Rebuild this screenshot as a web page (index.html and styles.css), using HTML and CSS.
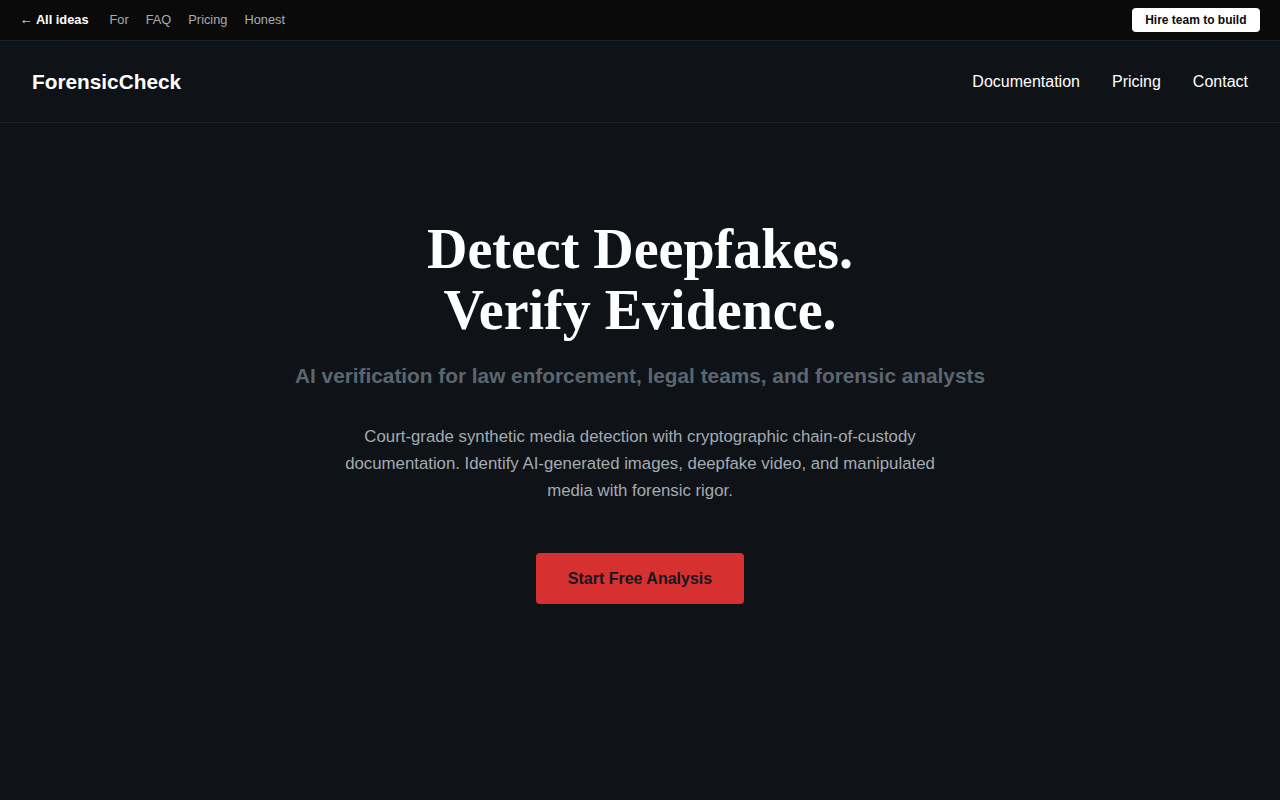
FILE: index.html
```html
<!DOCTYPE html>
<html lang="en">
<head>
<meta charset="utf-8">
<title>ForensicCheck</title>
<link rel="stylesheet" href="styles.css">
</head>
<body>
<div class="topbar">
  <div class="topbar-left">
    <a class="back" href="#">← All ideas</a>
    <a class="toplink" href="#">For</a>
    <a class="toplink" href="#">FAQ</a>
    <a class="toplink" href="#">Pricing</a>
    <a class="toplink" href="#">Honest</a>
  </div>
  <a class="hire" href="#">Hire team to build</a>
</div>
<header class="nav">
  <div class="logo">ForensicCheck</div>
  <nav class="nav-links">
    <a href="#">Documentation</a>
    <a href="#">Pricing</a>
    <a href="#">Contact</a>
  </nav>
</header>
<main class="hero">
  <h1>Detect Deepfakes.<br>Verify Evidence.</h1>
  <p class="sub">AI verification for law enforcement, legal teams, and forensic analysts</p>
  <p class="desc">Court-grade synthetic media detection with cryptographic chain-of-custody documentation. Identify AI-generated images, deepfake video, and manipulated media with forensic rigor.</p>
  <a class="cta" href="#">Start Free Analysis</a>
</main>
</body>
</html>
```
FILE: styles.css
```css
* { box-sizing: border-box; }
html, body { margin: 0; padding: 0; }
body {
  background: #0f1318;
  color: #ffffff;
  font-family: "Liberation Sans", Arial, sans-serif;
  min-height: 800px;
}
a { text-decoration: none; }
.topbar {
  height: 41px;
  background: #0a0a0a;
  border-bottom: 1px solid #1c1f24;
  display: flex;
  align-items: center;
  justify-content: space-between;
  padding: 0 20px 0 20px;
}
.topbar-left {
  display: flex;
  align-items: center;
  gap: 17px;
  font-size: 12.8px;
  padding-bottom: 2px;
}
.back {
  color: #ffffff;
  font-weight: 700;
  margin-right: 4px;
}
.toplink { color: #a8adb3; }
.hire {
  background: #ffffff;
  color: #0a0a0a;
  font-size: 12px;
  font-weight: 700;
  padding: 5px 13.5px;
  border-radius: 4px;
  line-height: 14px;
}
.nav {
  height: 82px;
  display: flex;
  align-items: center;
  justify-content: space-between;
  padding: 0 32px;
  border-bottom: 1px solid #1f242c;
}
.logo {
  font-size: 20.8px;
  font-weight: 700;
  color: #ffffff;
  padding-top: 1px;
}
.nav-links {
  display: flex;
  gap: 32px;
}
.nav-links a {
  color: #ffffff;
  font-size: 16px;
}
.hero {
  display: flex;
  flex-direction: column;
  align-items: center;
  text-align: center;
  padding-top: 96px;
}
.hero h1 {
  font-family: "Liberation Serif", "Times New Roman", serif;
  font-size: 56px;
  line-height: 61px;
  font-weight: 700;
  margin: 0;
  color: #ffffff;
}
.sub {
  font-size: 20.8px;
  font-weight: 700;
  color: #5c6670;
  margin: 23px 0 0;
}
.desc {
  max-width: 600px;
  font-size: 16.8px;
  line-height: 27px;
  color: #a3abb3;
  margin: 35px 0 0;
}
.cta {
  margin-top: 49px;
  background: #d63031;
  color: #15181c;
  font-size: 16px;
  font-weight: 700;
  width: 208px;
  height: 51px;
  display: flex;
  align-items: center;
  justify-content: center;
  border-radius: 4px;
}
```
